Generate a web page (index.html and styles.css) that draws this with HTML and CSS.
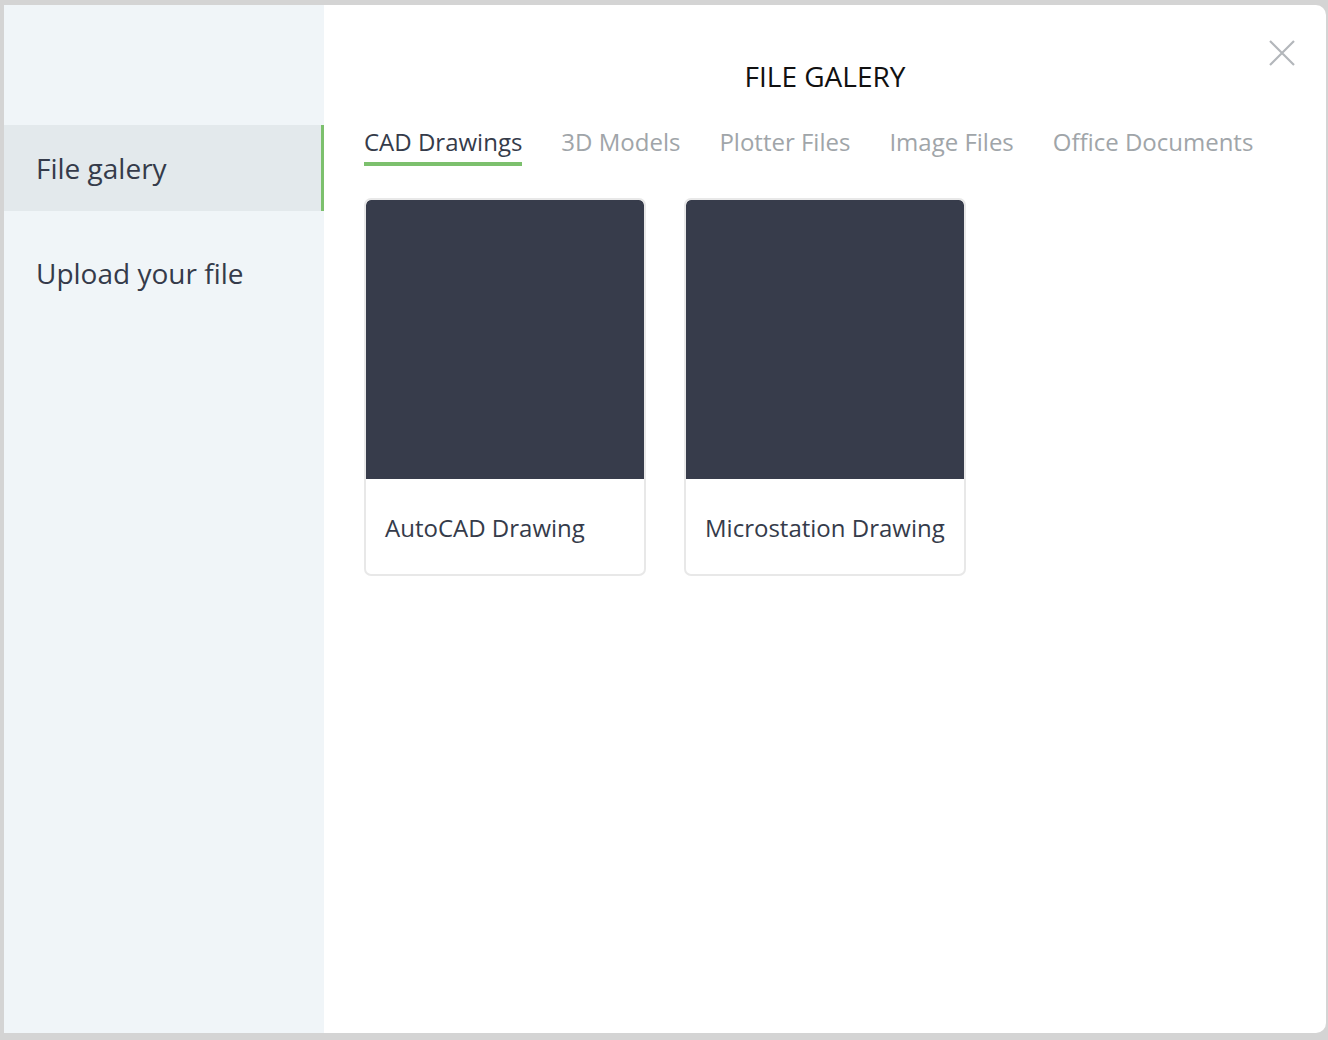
FILE: index.html
```html
<!DOCTYPE html>
<html>
<head>
<meta charset="utf-8">
<link rel="stylesheet" href="styles.css">
</head>
<body>
<div class="modal">
  <aside class="sidebar">
    <div class="side-item active">File galery</div>
    <div class="side-item">Upload your file</div>
  </aside>
  <main class="content">
    <button class="close" aria-label="Close">
      <svg width="26" height="26" viewBox="0 0 26 26"><path d="M1 1 L25 25 M25 1 L1 25" stroke="#b3b7bb" stroke-width="2.2" fill="none"/></svg>
    </button>
    <h1 class="title">FILE GALERY</h1>
    <nav class="tabs">
      <span class="tab active">CAD Drawings</span>
      <span class="tab">3D Models</span>
      <span class="tab">Plotter Files</span>
      <span class="tab">Image Files</span>
      <span class="tab">Office Documents</span>
    </nav>
    <div class="cards">
      <div class="card">
        <div class="thumb"></div>
        <div class="label">AutoCAD Drawing</div>
      </div>
      <div class="card">
        <div class="thumb"></div>
        <div class="label">Microstation Drawing</div>
      </div>
    </div>
  </main>
</div>
</body>
</html>
```
FILE: styles.css
```css
* { box-sizing: border-box; }
html, body { margin: 0; padding: 0; }
body {
  background: #d4d4d4;
  font-family: "Open Sans", "Noto Sans", sans-serif;
  padding: 5px 2px 7px 4px;
}
.modal {
  display: flex;
  height: 1028px;
  background: #ffffff;
  border-radius: 0 10px 10px 0;
  overflow: hidden;
}
.sidebar {
  width: 320px;
  flex: none;
  background: #f0f5f8;
  padding-top: 120px;
}
.side-item {
  font-size: 28px;
  color: #353b4a;
  padding: 0 32px;
  height: 86px;
  display: flex;
  align-items: center;
  margin-bottom: 19px;
}
.side-item.active {
  background: #e3e9ec;
  border-right: 3px solid #7cc06d;
}
.content {
  flex: 1;
  position: relative;
  padding: 0 40px;
}
.close {
  position: absolute;
  top: 35px;
  right: 31px;
  background: none;
  border: 0;
  padding: 0;
  width: 26px;
  height: 26px;
  cursor: pointer;
}
.close svg { display: block; }
.title {
  margin: 51px 0 0;
  text-align: center;
  font-size: 28px;
  font-weight: 400;
  color: #111;
  line-height: 40px;
}
.tabs {
  display: flex;
  gap: 39px;
  margin-top: 28px;
}
.tab {
  font-size: 24px;
  line-height: 36px;
  color: #a0a5a9;
  padding-bottom: 2px;
  border-bottom: 4px solid transparent;
}
.tab.active {
  color: #353b4a;
  border-bottom-color: #7cc06d;
}
.cards {
  display: flex;
  gap: 38px;
  margin-top: 32px;
}
.card {
  width: 282px;
  height: 378px;
  border: 2px solid #e8e8e8;
  border-radius: 7px;
  overflow: hidden;
  background: #fff;
}
.thumb {
  height: 279px;
  background: #373c4b;
  border-radius: 5px 5px 0 0;
}
.label {
  font-size: 24px;
  color: #353b4a;
  padding: 0 19px;
  height: 97px;
  display: flex;
  align-items: center;
}
```
